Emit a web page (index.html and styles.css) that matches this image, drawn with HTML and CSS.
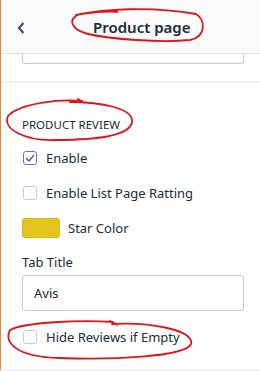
FILE: index.html
```html
<!DOCTYPE html>
<html lang="en">
<head>
  <meta charset="UTF-8">
  <title>Product page</title>
  <link rel="stylesheet" href="styles.css">
</head>
<body>
  <div class="panel">
    <div class="topbar">
      <span class="back">
        <svg width="10" height="14" viewBox="0 0 10 14"><path d="M7.5 2 L3 7 L7.5 12" fill="none" stroke="#454f5b" stroke-width="2.2"/></svg>
      </span>
      <span class="title">Product page</span>
    </div>

    <div class="prev-section">
      <div class="input-stub"></div>
    </div>

    <div class="section">
      <h4 class="section-title">PRODUCT REVIEW</h4>

      <label class="check-row">
        <span class="box checked">
          <svg width="10" height="8" viewBox="0 0 10 8"><path d="M1 4 L4 7 L9 1" fill="none" stroke="#6b5ea8" stroke-width="1.6"/></svg>
        </span>
        Enable
      </label>

      <label class="check-row">
        <span class="box"></span>
        Enable List Page Ratting
      </label>

      <div class="color-row">
        <span class="swatch"></span>
        Star Color
      </div>

      <div class="field">
        <div class="field-label">Tab Title</div>
        <div class="text-input">Avis</div>
      </div>

      <label class="check-row last">
        <span class="box"></span>
        Hide Reviews if Empty
      </label>
    </div>

    <!-- hand drawn marks -->
    <svg class="marks" width="260" height="371" viewBox="0 0 260 371">
      <path d="M76 15 C105 9 150 6 196 14 C206 20 206 37 190 40 C160 43 110 39 88 34 C72 30 66 19 80 14 C110 10 120 12 117 12" />
      <path d="M82 101 C60 99 20 103 8 116 C2 129 25 141 55 140 C95 140 130 136 132 122 C134 108 100 102 70 102 M78 99 L84 103" />
      <path d="M113 322 C80 320 25 322 10 330 C4 342 15 357 60 358 C110 360 185 357 191 344 C195 330 150 322 112 324 M110 321 L117 325" />
    </svg>
  </div>
</body>
</html>
```

FILE: styles.css
```css
body {
  margin: 0;
  font-family: "Noto Sans", "Open Sans", sans-serif;
  color: #212b36;
  background: #fff;
}

.panel {
  position: relative;
  width: 260px;
  height: 371px;
  box-sizing: border-box;
  border-left: 1px solid #e8862a;
  border-bottom: 2px solid #eef0f2;
  overflow: hidden;
}

.topbar {
  height: 54px;
  display: flex;
  align-items: center;
  background: #f9fafb;
  border-bottom: 1px solid #e3e6e9;
  box-sizing: border-box;
}
.topbar .back {
  width: 40px;
  display: flex;
  justify-content: center;
  padding-top: 2px;
}
.topbar .title {
  margin-left: 52px;
  font-size: 15px;
  font-weight: 600;
  color: #212b36;
}

.prev-section {
  height: 29px;
  border-bottom: 2px solid #eef0f2;
  box-sizing: border-box;
}
.input-stub {
  margin: 0 16px 0 21px;
  height: 9px;
  border: 1px solid #c4cdd5;
  border-top: none;
  border-radius: 0 0 3px 3px;
}

.section {
  padding: 34px 16px 0 21px;
  font-size: 13px;
}
.section-title {
  margin: 0 0 18px;
  font-size: 11.5px;
  font-weight: 400;
  color: #212b36;
  letter-spacing: 0;
}

.check-row {
  display: flex;
  align-items: center;
  gap: 9px;
  height: 16px;
  margin-bottom: 19px;
  color: #212b36;
}
.box {
  width: 14px;
  height: 14px;
  box-sizing: border-box;
  border: 1px solid #c4cdd5;
  border-radius: 3px;
  background: #fff;
  display: flex;
  align-items: center;
  justify-content: center;
  margin-left: 1px;
}
.box.checked {
  border-color: #7a6fb0;
}

.color-row {
  display: flex;
  align-items: center;
  gap: 8px;
  margin-top: -2px;
  margin-bottom: 15px;
}
.swatch {
  width: 38px;
  height: 20px;
  box-sizing: border-box;
  border-radius: 3px;
  background: #e3c51d;
  border: 1px solid #d6b917;
}

.field-label {
  margin-bottom: 4px;
}
.text-input {
  height: 36px;
  box-sizing: border-box;
  border: 1px solid #c4cdd5;
  border-radius: 3px;
  padding: 0 11px;
  display: flex;
  align-items: center;
  margin-bottom: 18px;
}

.check-row.last {
  margin-bottom: 0;
}

.marks {
  position: absolute;
  left: -1px;
  top: 0;
  pointer-events: none;
}
.marks path {
  fill: none;
  stroke: #e0141a;
  stroke-width: 1.8;
  stroke-linecap: round;
}
```
